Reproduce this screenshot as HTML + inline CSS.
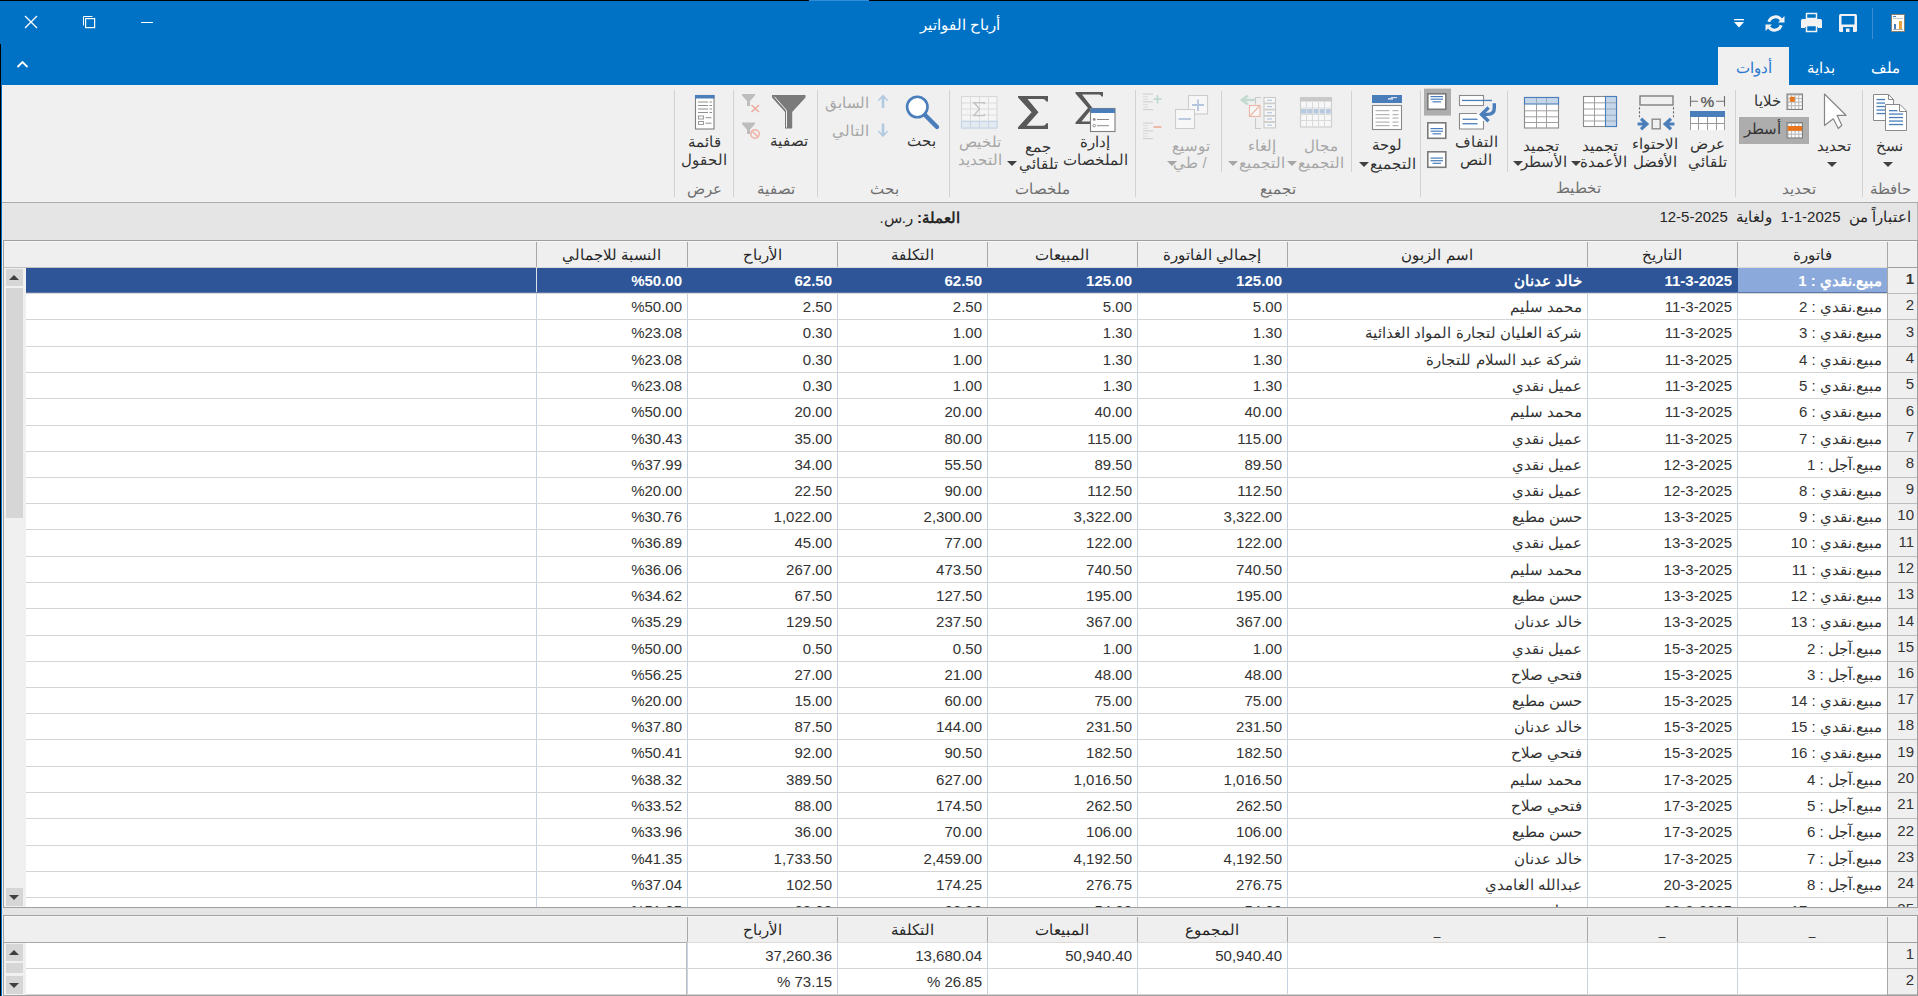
<!DOCTYPE html>
<html><head><meta charset="utf-8"><title>أرباح الفواتير</title><style>
*{box-sizing:border-box}
html,body{margin:0;padding:0}
body{width:1918px;height:996px;overflow:hidden;position:relative;background:#F0F0F0;font-family:"Liberation Sans",sans-serif;font-size:15px;color:#262626}
div,span,svg{position:absolute}
.t{white-space:nowrap;direction:rtl;text-align:center}
.gframe{border:1px solid #A0A0A0;background:#F0F0F0}
.hdr{background:#EFEFEF}
.hl{width:1px;background:#A8A8A8}
.hb{height:1px;background:#A0A0A0}
.ht{height:26px;line-height:26px;text-align:center;direction:rtl;white-space:nowrap;color:#262626}
.sbbg{background:#F0F0F0}
.sbtn{background:#D6D6D6}
.sthumb{background:#D6D6D6}
.tup{left:3px;top:50%;margin-top:-3px;width:0;height:0;border-left:5px solid transparent;border-right:5px solid transparent;border-bottom:5px solid #404040}
.tdn{left:3px;top:50%;margin-top:-2px;width:0;height:0;border-left:5px solid transparent;border-right:5px solid transparent;border-top:5px solid #404040}
.vl{width:1px;background:#C9D3E3}
.ct{direction:rtl;text-align:right;white-space:nowrap;color:#333;overflow:hidden}
.ct.sel{color:#fff;font-weight:bold}
.ri{left:0;width:30px;background:#EFEFEF;text-align:right;padding-right:3px;color:#333}
.ri.rsel{font-weight:bold}
.rt{white-space:nowrap;direction:rtl;text-align:center;color:#333;line-height:18px;height:18px}
.dis{color:#A6A6A6}
.gl{white-space:nowrap;direction:rtl;text-align:center;color:#707070;line-height:18px;height:18px}
.sep{width:1px;background:#D2D2D2}
.arr{width:0;height:0;border-left:5px solid transparent;border-right:5px solid transparent;border-top:5px solid #404040}
.arr.dis{border-top-color:#A6A6A6}
</style></head>
<body>
<div style="left:0;top:0;width:1918px;height:85px;background:#0072C6"></div>
<div style="left:0;top:0;width:1918px;height:1px;background:#000"></div>
<div style="left:809px;top:0;width:60px;height:1px;background:#2F8FD8"></div>
<div style="left:0;top:44px;width:1px;height:952px;background:#000"></div>
<div style="left:1px;top:85px;width:1px;height:911px;background:#0072C6"></div>
<div class="t" style="left:760px;top:15px;width:400px;height:20px;line-height:20px;color:#fff">أرباح الفواتير</div>
<svg style="left:24px;top:15px" width="14" height="14" viewBox="0 0 14 14"><path d="M1 1L13 13M13 1L1 13" stroke="#fff" stroke-width="1.3"/></svg>
<svg style="left:82px;top:15px" width="14" height="14" viewBox="0 0 14 14"><rect x="3.6" y="3.6" width="9" height="9" fill="none" stroke="#fff" stroke-width="1.2"/><path d="M1.5 10.5V1.5H10.5" fill="none" stroke="#fff" stroke-width="1"/></svg>
<div style="left:141px;top:22px;width:12px;height:1px;background:#fff"></div>
<svg style="left:16px;top:60px" width="13" height="9" viewBox="0 0 13 9"><path d="M1.5 7L6.5 2L11.5 7" fill="none" stroke="#fff" stroke-width="1.8"/></svg>
<div style="left:1718px;top:47px;width:71px;height:38px;background:#F0F0F0"></div>
<div class="t" style="left:1718px;top:58px;width:71px;height:20px;line-height:20px;color:#2B79D0">أدوات</div>
<div class="t" style="left:1790px;top:58px;width:62px;height:20px;line-height:20px;color:#fff">بداية</div>
<div class="t" style="left:1852px;top:58px;width:66px;height:20px;line-height:20px;color:#fff">ملف</div>
<svg style="left:1720px;top:0" width="198" height="45" viewBox="1720 0 198 45"><rect x="1891.5" y="14.5" width="13" height="17" fill="#fff" stroke="#8C8070"/><rect x="1893" y="16" width="3" height="1" fill="#4A7EBB"/><rect x="1893" y="18" width="10" height="1" fill="#C8C8C8"/><rect x="1894" y="24" width="2" height="5" fill="#4A7EBB"/><rect x="1899" y="21" width="3" height="8" fill="#E8A33A"/><rect x="1893" y="29" width="10" height="1" fill="#B0B0B0"/><rect x="1872" y="8" width="1" height="31" fill="#3C8BD3"/><path d="M1839 15.5Q1839 14 1840.5 14H1855.5Q1857 14 1857 15.5V30.5Q1857 32 1855.5 32H1840.5Q1839 32 1839 30.5Z" fill="#F2F2F2"/><rect x="1841.5" y="16" width="13" height="8.5" fill="#0072C6"/><rect x="1843" y="27" width="10" height="5" fill="#0072C6"/><rect x="1846" y="28.5" width="3.5" height="3.5" fill="#F2F2F2"/><rect x="1806.5" y="13.5" width="10" height="5" fill="none" stroke="#F2F2F2" stroke-width="1.5"/><path d="M1801 20.5Q1801 19 1802.5 19H1820.5Q1822 19 1822 20.5V27H1801Z" fill="#F2F2F2"/><rect x="1801" y="26" width="4" height="2" fill="#F2F2F2"/><rect x="1818" y="26" width="4" height="2" fill="#F2F2F2"/><rect x="1806.5" y="25.5" width="10" height="6" fill="#0072C6" stroke="#F2F2F2" stroke-width="1.5"/><path d="M1768.8 21.8A7 7 0 0 1 1781.2 19.8" fill="none" stroke="#F2F2F2" stroke-width="3"/><path d="M1784.5 16V22.5H1778Z" fill="#F2F2F2"/><path d="M1781.2 25.2A7 7 0 0 1 1768.8 27.2" fill="none" stroke="#F2F2F2" stroke-width="3"/><path d="M1765.5 31V24.5H1772Z" fill="#F2F2F2"/><rect x="1734" y="19" width="10" height="1.3" fill="#fff"/><path d="M1734 22H1744L1739 27.5Z" fill="#fff"/></svg>
<div style="left:2px;top:202px;width:1916px;height:1px;background:#ABABAB"></div>
<div style="left:2px;top:203px;width:1916px;height:37px;background:#E5E5E5"></div>
<div style="left:1917px;top:203px;width:1px;height:37px;background:#B8B8B8"></div>
<div style="left:1402px;top:207px;width:509px;height:20px;line-height:20px;direction:rtl;text-align:right;white-space:nowrap">اعتباراً من&nbsp; <bdi>1-1-2025</bdi>&nbsp; ولغاية&nbsp; <bdi>12-5-2025</bdi></div>
<div style="left:702px;top:208px;width:258px;height:20px;line-height:20px;direction:rtl;text-align:right;white-space:nowrap"><b>العملة:</b> ر.س.</div>
<svg style="left:660px;top:84px" width="1258" height="120" viewBox="660 84 1258 120" shape-rendering="geometricPrecision"><path d="M1873.5 94.5H1888.5L1893.5 99.5V120.5H1873.5Z" fill="#fff" stroke="#8A8A8A"/><path d="M1888.5 94.5V99.5H1893.5" fill="none" stroke="#8A8A8A"/><rect x="1876.5" y="98.9" width="8.5" height="1.3" fill="#4A7EBB"/><rect x="1876.5" y="102.4" width="8.5" height="1.3" fill="#4A7EBB"/><rect x="1876.5" y="105.9" width="8.5" height="1.3" fill="#4A7EBB"/><rect x="1876.5" y="109.4" width="8.5" height="1.3" fill="#4A7EBB"/><rect x="1876.5" y="112.9" width="8.5" height="1.3" fill="#4A7EBB"/><path d="M1885.5 104.5H1900L1906.5 111V130.5H1885.5Z" fill="#fff" stroke="#8A8A8A"/><path d="M1899.5 104.5V111.5H1906.5" fill="none" stroke="#8A8A8A"/><rect x="1889" y="110" width="8.5" height="1.3" fill="#4A7EBB"/><rect x="1889" y="113.4" width="14" height="1.3" fill="#4A7EBB"/><rect x="1889" y="116.9" width="14" height="1.3" fill="#4A7EBB"/><rect x="1889" y="120.4" width="14" height="1.3" fill="#4A7EBB"/><rect x="1889" y="123.9" width="14" height="1.3" fill="#4A7EBB"/><path d="M1824.5 94L1846 115.3H1837L1841.8 125.2L1838.3 128.5L1833.3 118.8L1824.5 125.5Z" fill="#fff" stroke="#878787" stroke-width="1.2" stroke-linejoin="round"/><rect x="1739" y="117" width="70" height="27" fill="#ADADAD"/><rect x="1787.0" y="94.0" width="15.5" height="15.5" fill="#BDBDBD" stroke="#7F7F7F"/><rect x="1788.5" y="95.5" width="2.4" height="2.4" fill="#fff"/><rect x="1788.5" y="99.1" width="2.4" height="2.4" fill="#fff"/><rect x="1788.5" y="102.7" width="2.4" height="2.4" fill="#fff"/><rect x="1788.5" y="106.3" width="2.4" height="2.4" fill="#fff"/><rect x="1792.1" y="95.5" width="2.4" height="2.4" fill="#fff"/><rect x="1792.1" y="99.1" width="2.4" height="2.4" fill="#fff"/><rect x="1792.1" y="102.7" width="2.4" height="2.4" fill="#fff"/><rect x="1792.1" y="106.3" width="2.4" height="2.4" fill="#fff"/><rect x="1795.7" y="95.5" width="2.4" height="2.4" fill="#fff"/><rect x="1795.7" y="99.1" width="2.4" height="2.4" fill="#fff"/><rect x="1795.7" y="102.7" width="2.4" height="2.4" fill="#fff"/><rect x="1795.7" y="106.3" width="2.4" height="2.4" fill="#fff"/><rect x="1799.3" y="95.5" width="2.4" height="2.4" fill="#fff"/><rect x="1799.3" y="99.1" width="2.4" height="2.4" fill="#fff"/><rect x="1799.3" y="102.7" width="2.4" height="2.4" fill="#fff"/><rect x="1799.3" y="106.3" width="2.4" height="2.4" fill="#fff"/><rect x="1789.8" y="96.8" width="5" height="5" fill="#E8741C"/><rect x="1787.0" y="122.5" width="15.5" height="15.5" fill="#BDBDBD" stroke="#7F7F7F"/><rect x="1788.5" y="124.0" width="2.4" height="2.4" fill="#fff"/><rect x="1788.5" y="127.6" width="2.4" height="2.4" fill="#fff"/><rect x="1788.5" y="131.2" width="2.4" height="2.4" fill="#fff"/><rect x="1788.5" y="134.8" width="2.4" height="2.4" fill="#fff"/><rect x="1792.1" y="124.0" width="2.4" height="2.4" fill="#fff"/><rect x="1792.1" y="127.6" width="2.4" height="2.4" fill="#fff"/><rect x="1792.1" y="131.2" width="2.4" height="2.4" fill="#fff"/><rect x="1792.1" y="134.8" width="2.4" height="2.4" fill="#fff"/><rect x="1795.7" y="124.0" width="2.4" height="2.4" fill="#fff"/><rect x="1795.7" y="127.6" width="2.4" height="2.4" fill="#fff"/><rect x="1795.7" y="131.2" width="2.4" height="2.4" fill="#fff"/><rect x="1795.7" y="134.8" width="2.4" height="2.4" fill="#fff"/><rect x="1799.3" y="124.0" width="2.4" height="2.4" fill="#fff"/><rect x="1799.3" y="127.6" width="2.4" height="2.4" fill="#fff"/><rect x="1799.3" y="131.2" width="2.4" height="2.4" fill="#fff"/><rect x="1799.3" y="134.8" width="2.4" height="2.4" fill="#fff"/><rect x="1787.5" y="126" width="14.5" height="4.8" fill="#E8741C"/><path d="M1690.5 96V106.5M1690.5 101.3H1698M1716 101.3H1724M1724.5 96V106.5" fill="none" stroke="#707070" stroke-width="1.1"/><text x="1707.3" y="106.8" font-family="Liberation Sans" font-weight="bold" font-size="15.5" text-anchor="middle" fill="#6A6A6A">%</text><rect x="1690" y="111" width="35" height="6" fill="#4A7EBB"/><rect x="1690.5" y="117" width="34" height="13" fill="#fff"/><path d="M1690.5 117V130M1698.5 117V130M1707.5 117V130M1716.5 117V130M1724.5 117V130M1690 123.5H1725" fill="none" stroke="#9A9A9A"/><rect x="1640" y="96" width="33" height="9" fill="none" stroke="#7F7F7F" stroke-width="1.4"/><path d="M1639.5 107.2V117.2M1673.5 107.2V117.2" stroke="#6A6A6A" stroke-width="1.1" stroke-dasharray="2.4 1.6"/><rect x="1652.2" y="119.2" width="8" height="9.6" fill="none" stroke="#8A8A8A" stroke-width="1.4"/><path d="M1637.6 124H1647M1641 118.8L1646.8 124L1641 129.2" fill="none" stroke="#4A7EBB" stroke-width="3.2" stroke-linejoin="miter"/><path d="M1674.4 124H1665M1671 118.8L1665.2 124L1671 129.2" fill="none" stroke="#4A7EBB" stroke-width="3.2" stroke-linejoin="miter"/><rect x="1583.5" y="96.5" width="33" height="30" fill="#fff" stroke="#8A8A8A" stroke-width="1.1"/><path d="M1594.5 96.5V126.5M1583.5 102.8H1605M1583.5 109H1605M1583.5 115.2H1605M1583.5 121H1605" stroke="#A0A0A0"/><rect x="1605.5" y="96.5" width="11" height="30" fill="#C5D6EA" stroke="#4A7EBB" stroke-width="1.1"/><path d="M1606 102.8H1616M1606 109H1616M1606 115.2H1616M1606 121H1616" stroke="#9AA8B8"/><rect x="1524.5" y="97.5" width="34" height="30.5" fill="#fff" stroke="#8A8A8A" stroke-width="1.1"/><path d="M1536.5 97.5V128M1546.5 97.5V128M1524.5 110.8H1558.5M1524.5 116.8H1558.5M1524.5 122.5H1558.5" stroke="#A0A0A0"/><rect x="1524.5" y="97.5" width="34" height="6.5" fill="#C5D6EA" stroke="#4A7EBB" stroke-width="1.1"/><path d="M1536.5 98V104M1546.5 98V104" stroke="#9AA8B8"/><rect x="1459.5" y="95.5" width="24" height="10" fill="#fff" stroke="#8A8A8A" stroke-width="1.1"/><rect x="1462" y="99.8" width="30" height="1.3" fill="#4A7EBB"/><rect x="1459.5" y="113.5" width="24" height="15.5" fill="#fff"/><path d="M1477 113.5H1459.5V129H1483.5V121" fill="none" stroke="#8A8A8A" stroke-width="1.1"/><rect x="1462.5" y="118.6" width="15" height="1.3" fill="#4A7EBB"/><rect x="1462.5" y="123.1" width="15" height="1.3" fill="#4A7EBB"/><path d="M1494.3 103.3V108Q1494.3 114.4 1487.5 114.4H1482" fill="none" stroke="#4A7EBB" stroke-width="3.4"/><path d="M1488.6 107.6L1481.5 114.4L1488.6 121.2" fill="none" stroke="#4A7EBB" stroke-width="3.4" stroke-linejoin="miter"/><rect x="1424" y="88.6" width="27" height="27" fill="#ADADAD"/><rect x="1427.8" y="93.8" width="18" height="15.5" fill="#fff" stroke="#7A7A7A" stroke-width="1.6"/><rect x="1430.5" y="96" width="12.5" height="1.2" fill="#4A7EBB"/><rect x="1430.5" y="98.6" width="12.5" height="1.2" fill="#4A7EBB"/><rect x="1432.5" y="101.2" width="8.5" height="1.2" fill="#4A7EBB"/><rect x="1427.8" y="122.8" width="18" height="15.5" fill="#fff" stroke="#7A7A7A" stroke-width="1.6"/><rect x="1430.5" y="128" width="12.5" height="1.2" fill="#4A7EBB"/><rect x="1430.5" y="130.6" width="12.5" height="1.2" fill="#4A7EBB"/><rect x="1432.5" y="133.2" width="8.5" height="1.2" fill="#4A7EBB"/><rect x="1427.8" y="151.8" width="18" height="15.5" fill="#fff" stroke="#7A7A7A" stroke-width="1.6"/><rect x="1430.5" y="157.5" width="12.5" height="1.2" fill="#4A7EBB"/><rect x="1430.5" y="160.1" width="12.5" height="1.2" fill="#4A7EBB"/><rect x="1432.5" y="162.7" width="8.5" height="1.2" fill="#4A7EBB"/><rect x="1372" y="95" width="30" height="8" fill="#4A7EBB"/><rect x="1388" y="98.3" width="5" height="1.2" fill="#fff"/><rect x="1391" y="97" width="6" height="1.2" fill="#D0DCEB"/><rect x="1372.5" y="105.5" width="29" height="24" fill="#fff" stroke="#8A8A8A" stroke-width="1.1"/><rect x="1375.5" y="110" width="14" height="1.2" fill="#B5B5B5"/><rect x="1392.5" y="110" width="6" height="1.2" fill="#B5B5B5"/><rect x="1375.5" y="114" width="14" height="1.2" fill="#B5B5B5"/><rect x="1392.5" y="114" width="6" height="1.2" fill="#B5B5B5"/><rect x="1375.5" y="117.5" width="14" height="1.2" fill="#B5B5B5"/><rect x="1392.5" y="117.5" width="6" height="1.2" fill="#B5B5B5"/><rect x="1375.5" y="121.5" width="14" height="1.2" fill="#B5B5B5"/><rect x="1392.5" y="121.5" width="6" height="1.2" fill="#B5B5B5"/><rect x="1375.5" y="125" width="14" height="1.2" fill="#B5B5B5"/><rect x="1392.5" y="125" width="6" height="1.2" fill="#B5B5B5"/><rect x="1300.5" y="97.5" width="31" height="29.5" fill="#F7F7F7" stroke="#CDCDCD" stroke-width="1.1"/><rect x="1300.5" y="97.5" width="31" height="4" fill="#C8C8C8"/><path d="M1306.5 102V127M1312.5 102V127M1318.5 102V127M1324.5 102V127M1300.5 108H1331.5M1300.5 114.5H1331.5M1300.5 120.5H1331.5" stroke="#DADADA"/><rect x="1301.0" y="109" width="5" height="4.6" fill="#B7CAE0"/><rect x="1307.2" y="109" width="5" height="4.6" fill="#B7CAE0"/><rect x="1313.4" y="109" width="5" height="4.6" fill="#B7CAE0"/><rect x="1319.6" y="109" width="5" height="4.6" fill="#B7CAE0"/><rect x="1325.8" y="109" width="5" height="4.6" fill="#B7CAE0"/><path d="M1256 100H1244M1248 95.5L1242 100L1248 104.5" fill="none" stroke="#C3DAD0" stroke-width="2.6"/><path d="M1261 97.5H1255.5V104.5M1255.5 118V128.5H1261" fill="none" stroke="#CACACA" stroke-width="1.1"/><rect x="1249.5" y="105.5" width="10.5" height="11" fill="#F7F7F7" stroke="#EDB9AA" stroke-width="1.2"/><path d="M1250 116L1259.5 106" stroke="#EDB9AA" stroke-width="1.2"/><rect x="1264" y="97.5" width="11.5" height="5.6" fill="#F7F7F7" stroke="#CACACA" stroke-width="1.1"/><rect x="1267" y="99.8" width="5" height="1.1" fill="#B0C4DC"/><rect x="1264" y="103.7" width="11.5" height="5.6" fill="#F7F7F7" stroke="#CACACA" stroke-width="1.1"/><rect x="1267" y="106.0" width="5" height="1.1" fill="#B0C4DC"/><rect x="1264" y="109.9" width="11.5" height="5.6" fill="#F7F7F7" stroke="#CACACA" stroke-width="1.1"/><rect x="1267" y="112.2" width="5" height="1.1" fill="#B0C4DC"/><rect x="1264" y="116.1" width="11.5" height="5.6" fill="#F7F7F7" stroke="#CACACA" stroke-width="1.1"/><rect x="1267" y="118.39999999999999" width="5" height="1.1" fill="#B0C4DC"/><rect x="1264" y="122.3" width="11.5" height="5.6" fill="#F7F7F7" stroke="#CACACA" stroke-width="1.1"/><rect x="1267" y="124.6" width="5" height="1.1" fill="#B0C4DC"/><rect x="1188.5" y="95.5" width="19" height="18.5" fill="#F7F7F7" stroke="#CDCDCD" stroke-width="1.1"/><path d="M1198 99.5V111M1192 105H1204" stroke="#B3C6DD" stroke-width="1.8"/><rect x="1175.5" y="109.5" width="19" height="19" fill="#F7F7F7" stroke="#CDCDCD" stroke-width="1.1"/><path d="M1178.5 119H1191" stroke="#B3C6DD" stroke-width="1.8"/><rect x="1143" y="93.5" width="10" height="1.1" fill="#CFCFCF"/><rect x="1143" y="96.1" width="5" height="1.1" fill="#DDDDDD"/><rect x="1143" y="98.7" width="5" height="1.1" fill="#DDDDDD"/><rect x="1143" y="101.3" width="10" height="1.1" fill="#CFCFCF"/><rect x="1143" y="103.9" width="5" height="1.1" fill="#DDDDDD"/><rect x="1143" y="106.5" width="5" height="1.1" fill="#DDDDDD"/><rect x="1143" y="109.1" width="10" height="1.1" fill="#CFCFCF"/><path d="M1157.5 95V103.5M1153.5 99.2H1161.5" stroke="#BFD9CF" stroke-width="1.8"/><rect x="1143" y="122.5" width="10" height="1.1" fill="#CFCFCF"/><rect x="1143" y="125.1" width="5" height="1.1" fill="#DDDDDD"/><rect x="1143" y="127.7" width="5" height="1.1" fill="#DDDDDD"/><rect x="1143" y="130.3" width="10" height="1.1" fill="#CFCFCF"/><rect x="1143" y="132.9" width="5" height="1.1" fill="#DDDDDD"/><rect x="1143" y="135.5" width="5" height="1.1" fill="#DDDDDD"/><rect x="1143" y="138.1" width="10" height="1.1" fill="#CFCFCF"/><path d="M1153.5 127H1161.5" stroke="#EDB3A3" stroke-width="1.8"/><path d="M1075.5 92H1103V96.5H1101.6Q1100.6 94.5 1099 94.5H1082L1092.5 108L1081.5 121.5H1099.5Q1101.2 121.5 1102 119.5H1103V124H1075.5V122.5L1088 108L1075.5 93.5Z" fill="#595959"/><rect x="1090.5" y="108.5" width="24.5" height="23" fill="#fff" stroke="#7F7F7F" stroke-width="1.1"/><rect x="1090.5" y="108.5" width="24.5" height="4.5" fill="#4A7EBB"/><circle cx="1094.2" cy="119.4" r="1.4" fill="#8A8A8A"/><circle cx="1094.2" cy="125.6" r="1.3" fill="none" stroke="#8A8A8A" stroke-width="0.9"/><rect x="1097" y="119" width="12" height="1" fill="#8A8A8A"/><rect x="1097" y="125.2" width="12" height="1" fill="#8A8A8A"/><path d="M1018 96H1048V101.5H1046.3Q1045.3 99 1043 99H1027.5L1038.5 112.2L1026.5 125.8H1043Q1045.3 125.8 1046.3 123.2H1048V129H1018V127.3L1031.6 112.2L1018 97.6Z" fill="#595959"/><rect x="961.5" y="96.5" width="35.5" height="31.5" fill="#F5F5F5" stroke="#D8D8D8" stroke-width="1.1"/><path d="M970.5 96.5V128M979.5 96.5V128M988.5 96.5V128M961.5 103H997M961.5 109H997M961.5 115H997M961.5 121H997" stroke="#DCDCDC"/><rect x="961.5" y="121.5" width="35.5" height="6.5" fill="#E3EAF2" stroke="#C6D6E8" stroke-width="1.1"/><path d="M970.5 122V128M979.5 122V128M988.5 122V128" stroke="#C6D6E8"/><path d="M972.8 102H985V104.3H984Q983.6 103.2 982.6 103.2H975.7L980.4 109L975.2 115H982.7Q983.7 115 984.2 113.8H985V116.2H972.8V115.6L978.6 109L972.8 102.6Z" fill="#C4C4C4"/><circle cx="917.3" cy="107" r="10.2" fill="#fff" stroke="#4A7EBB" stroke-width="2.6"/><path d="M925 115L937 127" stroke="#4A7EBB" stroke-width="4.4" stroke-linecap="round"/><path d="M883 94.5L888 100V101.5L884.3 98.5V108H881.7V98.5L878 101.5V100Z" fill="#B3C9E0"/><path d="M883 137.2L888 131.7V130.2L884.3 133.2V123.5H881.7V133.2L878 130.2V131.7Z" fill="#B3C9E0"/><path d="M772 95H805.5V97.5L792.2 112V128.5H785V112L772 97.5Z" fill="#7A7A7A"/><path d="M774.5 96.8L786.5 110.5V127.5" fill="none" stroke="#fff" stroke-width="0.9"/><path d="M742 94H755V95.5L750 101V106H747V101L742 95.5Z" fill="#BDBDBD"/><path d="M751.5 105L759 112M759 105L751.5 112" stroke="#EFA99A" stroke-width="1.5"/><path d="M742 122.5H755V124L750 129.5V134H747V129.5L742 124Z" fill="#BDBDBD"/><circle cx="755" cy="134" r="4.2" fill="#F0F0F0" stroke="#EFB0A4" stroke-width="1.5"/><path d="M752.2 131.2L757.8 136.8" stroke="#EFB0A4" stroke-width="1.5"/><rect x="695.5" y="95.5" width="18.5" height="33.5" fill="#fff" stroke="#808080" stroke-width="1.1"/><rect x="695" y="95" width="19.5" height="3.5" fill="#4A7EBB"/><rect x="698" y="101.5" width="10" height="1" fill="#8F8F8F"/><rect x="709.5" y="101.5" width="2.5" height="1" fill="#8F8F8F"/><rect x="698" y="105" width="10" height="1" fill="#8F8F8F"/><rect x="709.5" y="105" width="2.5" height="1" fill="#8F8F8F"/><rect x="698" y="108.5" width="10" height="1" fill="#8F8F8F"/><rect x="709.5" y="108.5" width="2.5" height="1" fill="#8F8F8F"/><rect x="698" y="112" width="10" height="1" fill="#8F8F8F"/><rect x="709.5" y="112" width="2.5" height="1" fill="#8F8F8F"/><rect x="698.5" y="116" width="5" height="3" fill="none" stroke="#8F8F8F" stroke-width="0.9"/><rect x="705.5" y="117.2" width="6" height="1" fill="#8F8F8F"/><rect x="698.5" y="121.5" width="5" height="3" fill="none" stroke="#8F8F8F" stroke-width="0.9"/><rect x="705.5" y="122.7" width="6" height="1" fill="#8F8F8F"/></svg>
<div class="sep" style="left:1862px;top:90px;height:107px"></div>
<div class="sep" style="left:1735px;top:90px;height:107px"></div>
<div class="sep" style="left:1420px;top:90px;height:107px"></div>
<div class="sep" style="left:1135px;top:90px;height:107px"></div>
<div class="sep" style="left:949px;top:90px;height:107px"></div>
<div class="sep" style="left:817px;top:90px;height:107px"></div>
<div class="sep" style="left:733px;top:90px;height:107px"></div>
<div class="sep" style="left:674px;top:90px;height:107px"></div>
<div class="sep" style="left:1507px;top:91px;height:81px"></div>
<div class="sep" style="left:1351px;top:91px;height:81px"></div>
<div class="sep" style="left:1221px;top:91px;height:81px"></div>
<div class="rt" style="left:1829.0px;top:136.5px;width:120px;">نسخ</div>
<div class="arr" style="left:1883px;top:161.5px"></div>
<div class="gl" style="left:1830.0px;top:180px;width:120px;">حافظة</div>
<div class="rt" style="left:1774.0px;top:136.5px;width:120px;">تحديد</div>
<div class="arr" style="left:1827px;top:161.5px"></div>
<div class="rt" style="left:1661px;top:91.5px;width:120px;text-align:right;">خلايا</div>
<div class="rt" style="left:1661px;top:120px;width:120px;text-align:right;">أسطر</div>
<div class="gl" style="left:1739.0px;top:180px;width:120px;">تحديد</div>
<div class="rt" style="left:1647.0px;top:135px;width:120px;">عرض</div>
<div class="rt" style="left:1647.0px;top:153px;width:120px;">تلقائي</div>
<div class="rt" style="left:1595.0px;top:135px;width:120px;">الاحتواء</div>
<div class="rt" style="left:1595.0px;top:153px;width:120px;">الأفضل</div>
<div class="rt" style="left:1540.0px;top:137px;width:120px;">تجميد</div>
<div class="rt" style="left:1543.0px;top:153px;width:120px;">الأعمدة</div>
<div class="arr" style="left:1571px;top:161px"></div>
<div class="rt" style="left:1481.0px;top:137px;width:120px;">تجميد</div>
<div class="rt" style="left:1484.0px;top:153px;width:120px;">الأسطر</div>
<div class="arr" style="left:1513px;top:161px"></div>
<div class="rt" style="left:1416.0px;top:133px;width:120px;">التفاف</div>
<div class="rt" style="left:1416.0px;top:151px;width:120px;">النص</div>
<div class="gl" style="left:1518.0px;top:179px;width:120px;">تخطيط</div>
<div class="rt" style="left:1327.0px;top:135.5px;width:120px;">لوحة</div>
<div class="rt" style="left:1333.0px;top:154.5px;width:120px;">التجميع</div>
<div class="arr" style="left:1358.5px;top:161.5px"></div>
<div class="rt dis" style="left:1261.0px;top:136.5px;width:120px;">مجال</div>
<div class="rt dis" style="left:1261.0px;top:154px;width:120px;">التجميع</div>
<div class="arr dis" style="left:1287px;top:161px"></div>
<div class="rt dis" style="left:1202.0px;top:136.5px;width:120px;">إلغاء</div>
<div class="rt dis" style="left:1202.0px;top:154px;width:120px;">التجميع</div>
<div class="arr dis" style="left:1228px;top:161px"></div>
<div class="rt dis" style="left:1131.0px;top:136.5px;width:120px;">توسيع</div>
<div class="rt dis" style="left:1130.0px;top:154px;width:120px;">/ طي</div>
<div class="arr dis" style="left:1167px;top:161px"></div>
<div class="gl" style="left:1218.0px;top:180px;width:120px;">تجميع</div>
<div class="rt" style="left:1035.0px;top:133px;width:120px;">إدارة</div>
<div class="rt" style="left:1035.0px;top:150.5px;width:120px;">الملخصات</div>
<div class="rt" style="left:978.0px;top:138px;width:120px;">جمع</div>
<div class="rt" style="left:978.0px;top:154.5px;width:120px;">تلقائي</div>
<div class="arr" style="left:1007px;top:161px"></div>
<div class="rt dis" style="left:920.0px;top:133px;width:120px;">تلخيص</div>
<div class="rt dis" style="left:920.0px;top:150.5px;width:120px;">التحديد</div>
<div class="gl" style="left:982.0px;top:180px;width:120px;">ملخصات</div>
<div class="rt" style="left:861.5px;top:132px;width:120px;">بحث</div>
<div class="rt dis" style="left:749px;top:93.5px;width:120px;text-align:right;">السابق</div>
<div class="rt dis" style="left:749px;top:121.5px;width:120px;text-align:right;">التالي</div>
<div class="gl" style="left:824.0px;top:180px;width:120px;">بحث</div>
<div class="rt" style="left:729.0px;top:132px;width:120px;">تصفية</div>
<div class="gl" style="left:716.0px;top:180px;width:120px;">تصفية</div>
<div class="rt" style="left:644.0px;top:133px;width:120px;">قائمة</div>
<div class="rt" style="left:644.0px;top:151px;width:120px;">الحقول</div>
<div class="gl" style="left:644.0px;top:180px;width:120px;">عرض</div>
<div class="gframe" style="left:3px;top:240px;width:1915px;height:668px"></div>
<div class="hdr" style="left:4px;top:241px;width:1913px;height:26px"></div>
<div class="hl" style="left:1737px;top:241px;height:26px"></div>
<div class="ht" style="left:1737px;top:242px;width:150px">فاتورة</div>
<div class="hl" style="left:1587px;top:241px;height:26px"></div>
<div class="ht" style="left:1587px;top:242px;width:150px">التاريخ</div>
<div class="hl" style="left:1287px;top:241px;height:26px"></div>
<div class="ht" style="left:1287px;top:242px;width:300px">اسم الزبون</div>
<div class="hl" style="left:1137px;top:241px;height:26px"></div>
<div class="ht" style="left:1137px;top:242px;width:150px">إجمالي الفاتورة</div>
<div class="hl" style="left:987px;top:241px;height:26px"></div>
<div class="ht" style="left:987px;top:242px;width:150px">المبيعات</div>
<div class="hl" style="left:837px;top:241px;height:26px"></div>
<div class="ht" style="left:837px;top:242px;width:150px">التكلفة</div>
<div class="hl" style="left:687px;top:241px;height:26px"></div>
<div class="ht" style="left:687px;top:242px;width:150px">الأرباح</div>
<div class="hl" style="left:536px;top:241px;height:26px"></div>
<div class="ht" style="left:536px;top:242px;width:151px">النسبة للاجمالي</div>
<div class="hl" style="left:1887px;top:241px;height:26px"></div>
<div class="hb" style="left:4px;top:267px;width:532px;background:#C4C0BC"></div>
<div class="hb" style="left:536px;top:267px;width:1351px;background:#DEDBD7"></div>
<div class="hb" style="left:1887px;top:267px;width:30px;background:#A0A0A0"></div>
<div style="left:4px;top:241px;width:1913px;height:1px;background:#F7F7F7"></div>
<div class="sbbg" style="left:4px;top:268px;width:22px;height:639px"></div>
<div class="sbtn" style="left:6px;top:269px;width:17px;height:17px"><div class="tup"></div></div>
<div class="sthumb" style="left:6px;top:288px;width:17px;height:230px"></div>
<div class="sbtn" style="left:6px;top:888px;width:17px;height:18px"><div class="tdn"></div></div>
<div style="position:absolute;left:26px;top:268px;width:1861px;height:639px;background:#fff;overflow:hidden">
<div style="position:absolute;left:0;top:0px;width:1861px;height:25px;background:#2D5597"></div>
<div style="position:absolute;left:1712px;top:0px;width:149px;height:25px;background:#8BA9DB"></div>
<div style="position:absolute;left:510px;top:0px;width:1px;height:25px;background:#DCE1EA"></div>
<div style="position:absolute;left:0;top:24px;width:1861px;height:1px;background:#5C77A8"></div>
<div style="position:absolute;left:0;top:25px;width:1861px;height:1px;background:#D8D8D8"></div>
<div class="ct sel" style="left:1712px;top:0px;width:144px;height:25px;line-height:25px">مبيع.نقدي : 1</div>
<div class="ct sel" style="left:1562px;top:0px;width:144px;height:25px;line-height:25px">11-3-2025</div>
<div class="ct sel" style="left:1262px;top:0px;width:294px;height:25px;line-height:25px">خالد عدنان</div>
<div class="ct sel" style="left:1112px;top:0px;width:144px;height:25px;line-height:25px">125.00</div>
<div class="ct sel" style="left:962px;top:0px;width:144px;height:25px;line-height:25px">125.00</div>
<div class="ct sel" style="left:812px;top:0px;width:144px;height:25px;line-height:25px">62.50</div>
<div class="ct sel" style="left:662px;top:0px;width:144px;height:25px;line-height:25px">62.50</div>
<div class="ct sel" style="left:511px;top:0px;width:145px;height:25px;line-height:25px">%50.00</div>
<div style="position:absolute;left:0;top:51px;width:1861px;height:1px;background:#D5D5D5"></div>
<div class="vl" style="left:1711px;top:26px;height:25px"></div>
<div class="ct" style="left:1712px;top:26px;width:144px;height:25px;line-height:25px">مبيع.نقدي : 2</div>
<div class="vl" style="left:1561px;top:26px;height:25px"></div>
<div class="ct" style="left:1562px;top:26px;width:144px;height:25px;line-height:25px">11-3-2025</div>
<div class="vl" style="left:1261px;top:26px;height:25px"></div>
<div class="ct" style="left:1262px;top:26px;width:294px;height:25px;line-height:25px">محمد سليم</div>
<div class="vl" style="left:1111px;top:26px;height:25px"></div>
<div class="ct" style="left:1112px;top:26px;width:144px;height:25px;line-height:25px">5.00</div>
<div class="vl" style="left:961px;top:26px;height:25px"></div>
<div class="ct" style="left:962px;top:26px;width:144px;height:25px;line-height:25px">5.00</div>
<div class="vl" style="left:811px;top:26px;height:25px"></div>
<div class="ct" style="left:812px;top:26px;width:144px;height:25px;line-height:25px">2.50</div>
<div class="vl" style="left:661px;top:26px;height:25px"></div>
<div class="ct" style="left:662px;top:26px;width:144px;height:25px;line-height:25px">2.50</div>
<div class="vl" style="left:510px;top:26px;height:25px"></div>
<div class="ct" style="left:511px;top:26px;width:145px;height:25px;line-height:25px">%50.00</div>
<div style="position:absolute;left:0;top:78px;width:1861px;height:1px;background:#D5D5D5"></div>
<div class="vl" style="left:1711px;top:52px;height:26px"></div>
<div class="ct" style="left:1712px;top:52px;width:144px;height:26px;line-height:26px">مبيع.نقدي : 3</div>
<div class="vl" style="left:1561px;top:52px;height:26px"></div>
<div class="ct" style="left:1562px;top:52px;width:144px;height:26px;line-height:26px">11-3-2025</div>
<div class="vl" style="left:1261px;top:52px;height:26px"></div>
<div class="ct" style="left:1262px;top:52px;width:294px;height:26px;line-height:26px">شركة العليان لتجارة المواد الغذائية</div>
<div class="vl" style="left:1111px;top:52px;height:26px"></div>
<div class="ct" style="left:1112px;top:52px;width:144px;height:26px;line-height:26px">1.30</div>
<div class="vl" style="left:961px;top:52px;height:26px"></div>
<div class="ct" style="left:962px;top:52px;width:144px;height:26px;line-height:26px">1.30</div>
<div class="vl" style="left:811px;top:52px;height:26px"></div>
<div class="ct" style="left:812px;top:52px;width:144px;height:26px;line-height:26px">1.00</div>
<div class="vl" style="left:661px;top:52px;height:26px"></div>
<div class="ct" style="left:662px;top:52px;width:144px;height:26px;line-height:26px">0.30</div>
<div class="vl" style="left:510px;top:52px;height:26px"></div>
<div class="ct" style="left:511px;top:52px;width:145px;height:26px;line-height:26px">%23.08</div>
<div style="position:absolute;left:0;top:104px;width:1861px;height:1px;background:#D5D5D5"></div>
<div class="vl" style="left:1711px;top:79px;height:25px"></div>
<div class="ct" style="left:1712px;top:79px;width:144px;height:25px;line-height:25px">مبيع.نقدي : 4</div>
<div class="vl" style="left:1561px;top:79px;height:25px"></div>
<div class="ct" style="left:1562px;top:79px;width:144px;height:25px;line-height:25px">11-3-2025</div>
<div class="vl" style="left:1261px;top:79px;height:25px"></div>
<div class="ct" style="left:1262px;top:79px;width:294px;height:25px;line-height:25px">شركة عبد السلام للتجارة</div>
<div class="vl" style="left:1111px;top:79px;height:25px"></div>
<div class="ct" style="left:1112px;top:79px;width:144px;height:25px;line-height:25px">1.30</div>
<div class="vl" style="left:961px;top:79px;height:25px"></div>
<div class="ct" style="left:962px;top:79px;width:144px;height:25px;line-height:25px">1.30</div>
<div class="vl" style="left:811px;top:79px;height:25px"></div>
<div class="ct" style="left:812px;top:79px;width:144px;height:25px;line-height:25px">1.00</div>
<div class="vl" style="left:661px;top:79px;height:25px"></div>
<div class="ct" style="left:662px;top:79px;width:144px;height:25px;line-height:25px">0.30</div>
<div class="vl" style="left:510px;top:79px;height:25px"></div>
<div class="ct" style="left:511px;top:79px;width:145px;height:25px;line-height:25px">%23.08</div>
<div style="position:absolute;left:0;top:130px;width:1861px;height:1px;background:#D5D5D5"></div>
<div class="vl" style="left:1711px;top:105px;height:25px"></div>
<div class="ct" style="left:1712px;top:105px;width:144px;height:25px;line-height:25px">مبيع.نقدي : 5</div>
<div class="vl" style="left:1561px;top:105px;height:25px"></div>
<div class="ct" style="left:1562px;top:105px;width:144px;height:25px;line-height:25px">11-3-2025</div>
<div class="vl" style="left:1261px;top:105px;height:25px"></div>
<div class="ct" style="left:1262px;top:105px;width:294px;height:25px;line-height:25px">عميل نقدي</div>
<div class="vl" style="left:1111px;top:105px;height:25px"></div>
<div class="ct" style="left:1112px;top:105px;width:144px;height:25px;line-height:25px">1.30</div>
<div class="vl" style="left:961px;top:105px;height:25px"></div>
<div class="ct" style="left:962px;top:105px;width:144px;height:25px;line-height:25px">1.30</div>
<div class="vl" style="left:811px;top:105px;height:25px"></div>
<div class="ct" style="left:812px;top:105px;width:144px;height:25px;line-height:25px">1.00</div>
<div class="vl" style="left:661px;top:105px;height:25px"></div>
<div class="ct" style="left:662px;top:105px;width:144px;height:25px;line-height:25px">0.30</div>
<div class="vl" style="left:510px;top:105px;height:25px"></div>
<div class="ct" style="left:511px;top:105px;width:145px;height:25px;line-height:25px">%23.08</div>
<div style="position:absolute;left:0;top:157px;width:1861px;height:1px;background:#D5D5D5"></div>
<div class="vl" style="left:1711px;top:131px;height:26px"></div>
<div class="ct" style="left:1712px;top:131px;width:144px;height:26px;line-height:26px">مبيع.نقدي : 6</div>
<div class="vl" style="left:1561px;top:131px;height:26px"></div>
<div class="ct" style="left:1562px;top:131px;width:144px;height:26px;line-height:26px">11-3-2025</div>
<div class="vl" style="left:1261px;top:131px;height:26px"></div>
<div class="ct" style="left:1262px;top:131px;width:294px;height:26px;line-height:26px">محمد سليم</div>
<div class="vl" style="left:1111px;top:131px;height:26px"></div>
<div class="ct" style="left:1112px;top:131px;width:144px;height:26px;line-height:26px">40.00</div>
<div class="vl" style="left:961px;top:131px;height:26px"></div>
<div class="ct" style="left:962px;top:131px;width:144px;height:26px;line-height:26px">40.00</div>
<div class="vl" style="left:811px;top:131px;height:26px"></div>
<div class="ct" style="left:812px;top:131px;width:144px;height:26px;line-height:26px">20.00</div>
<div class="vl" style="left:661px;top:131px;height:26px"></div>
<div class="ct" style="left:662px;top:131px;width:144px;height:26px;line-height:26px">20.00</div>
<div class="vl" style="left:510px;top:131px;height:26px"></div>
<div class="ct" style="left:511px;top:131px;width:145px;height:26px;line-height:26px">%50.00</div>
<div style="position:absolute;left:0;top:183px;width:1861px;height:1px;background:#D5D5D5"></div>
<div class="vl" style="left:1711px;top:158px;height:25px"></div>
<div class="ct" style="left:1712px;top:158px;width:144px;height:25px;line-height:25px">مبيع.نقدي : 7</div>
<div class="vl" style="left:1561px;top:158px;height:25px"></div>
<div class="ct" style="left:1562px;top:158px;width:144px;height:25px;line-height:25px">11-3-2025</div>
<div class="vl" style="left:1261px;top:158px;height:25px"></div>
<div class="ct" style="left:1262px;top:158px;width:294px;height:25px;line-height:25px">عميل نقدي</div>
<div class="vl" style="left:1111px;top:158px;height:25px"></div>
<div class="ct" style="left:1112px;top:158px;width:144px;height:25px;line-height:25px">115.00</div>
<div class="vl" style="left:961px;top:158px;height:25px"></div>
<div class="ct" style="left:962px;top:158px;width:144px;height:25px;line-height:25px">115.00</div>
<div class="vl" style="left:811px;top:158px;height:25px"></div>
<div class="ct" style="left:812px;top:158px;width:144px;height:25px;line-height:25px">80.00</div>
<div class="vl" style="left:661px;top:158px;height:25px"></div>
<div class="ct" style="left:662px;top:158px;width:144px;height:25px;line-height:25px">35.00</div>
<div class="vl" style="left:510px;top:158px;height:25px"></div>
<div class="ct" style="left:511px;top:158px;width:145px;height:25px;line-height:25px">%30.43</div>
<div style="position:absolute;left:0;top:209px;width:1861px;height:1px;background:#D5D5D5"></div>
<div class="vl" style="left:1711px;top:184px;height:25px"></div>
<div class="ct" style="left:1712px;top:184px;width:144px;height:25px;line-height:25px">مبيع.آجل : 1</div>
<div class="vl" style="left:1561px;top:184px;height:25px"></div>
<div class="ct" style="left:1562px;top:184px;width:144px;height:25px;line-height:25px">12-3-2025</div>
<div class="vl" style="left:1261px;top:184px;height:25px"></div>
<div class="ct" style="left:1262px;top:184px;width:294px;height:25px;line-height:25px">عميل نقدي</div>
<div class="vl" style="left:1111px;top:184px;height:25px"></div>
<div class="ct" style="left:1112px;top:184px;width:144px;height:25px;line-height:25px">89.50</div>
<div class="vl" style="left:961px;top:184px;height:25px"></div>
<div class="ct" style="left:962px;top:184px;width:144px;height:25px;line-height:25px">89.50</div>
<div class="vl" style="left:811px;top:184px;height:25px"></div>
<div class="ct" style="left:812px;top:184px;width:144px;height:25px;line-height:25px">55.50</div>
<div class="vl" style="left:661px;top:184px;height:25px"></div>
<div class="ct" style="left:662px;top:184px;width:144px;height:25px;line-height:25px">34.00</div>
<div class="vl" style="left:510px;top:184px;height:25px"></div>
<div class="ct" style="left:511px;top:184px;width:145px;height:25px;line-height:25px">%37.99</div>
<div style="position:absolute;left:0;top:235px;width:1861px;height:1px;background:#D5D5D5"></div>
<div class="vl" style="left:1711px;top:210px;height:25px"></div>
<div class="ct" style="left:1712px;top:210px;width:144px;height:25px;line-height:25px">مبيع.نقدي : 8</div>
<div class="vl" style="left:1561px;top:210px;height:25px"></div>
<div class="ct" style="left:1562px;top:210px;width:144px;height:25px;line-height:25px">12-3-2025</div>
<div class="vl" style="left:1261px;top:210px;height:25px"></div>
<div class="ct" style="left:1262px;top:210px;width:294px;height:25px;line-height:25px">عميل نقدي</div>
<div class="vl" style="left:1111px;top:210px;height:25px"></div>
<div class="ct" style="left:1112px;top:210px;width:144px;height:25px;line-height:25px">112.50</div>
<div class="vl" style="left:961px;top:210px;height:25px"></div>
<div class="ct" style="left:962px;top:210px;width:144px;height:25px;line-height:25px">112.50</div>
<div class="vl" style="left:811px;top:210px;height:25px"></div>
<div class="ct" style="left:812px;top:210px;width:144px;height:25px;line-height:25px">90.00</div>
<div class="vl" style="left:661px;top:210px;height:25px"></div>
<div class="ct" style="left:662px;top:210px;width:144px;height:25px;line-height:25px">22.50</div>
<div class="vl" style="left:510px;top:210px;height:25px"></div>
<div class="ct" style="left:511px;top:210px;width:145px;height:25px;line-height:25px">%20.00</div>
<div style="position:absolute;left:0;top:261px;width:1861px;height:1px;background:#D5D5D5"></div>
<div class="vl" style="left:1711px;top:236px;height:25px"></div>
<div class="ct" style="left:1712px;top:236px;width:144px;height:25px;line-height:25px">مبيع.نقدي : 9</div>
<div class="vl" style="left:1561px;top:236px;height:25px"></div>
<div class="ct" style="left:1562px;top:236px;width:144px;height:25px;line-height:25px">13-3-2025</div>
<div class="vl" style="left:1261px;top:236px;height:25px"></div>
<div class="ct" style="left:1262px;top:236px;width:294px;height:25px;line-height:25px">حسن مطيع</div>
<div class="vl" style="left:1111px;top:236px;height:25px"></div>
<div class="ct" style="left:1112px;top:236px;width:144px;height:25px;line-height:25px">3,322.00</div>
<div class="vl" style="left:961px;top:236px;height:25px"></div>
<div class="ct" style="left:962px;top:236px;width:144px;height:25px;line-height:25px">3,322.00</div>
<div class="vl" style="left:811px;top:236px;height:25px"></div>
<div class="ct" style="left:812px;top:236px;width:144px;height:25px;line-height:25px">2,300.00</div>
<div class="vl" style="left:661px;top:236px;height:25px"></div>
<div class="ct" style="left:662px;top:236px;width:144px;height:25px;line-height:25px">1,022.00</div>
<div class="vl" style="left:510px;top:236px;height:25px"></div>
<div class="ct" style="left:511px;top:236px;width:145px;height:25px;line-height:25px">%30.76</div>
<div style="position:absolute;left:0;top:288px;width:1861px;height:1px;background:#D5D5D5"></div>
<div class="vl" style="left:1711px;top:262px;height:26px"></div>
<div class="ct" style="left:1712px;top:262px;width:144px;height:26px;line-height:26px">مبيع.نقدي : 10</div>
<div class="vl" style="left:1561px;top:262px;height:26px"></div>
<div class="ct" style="left:1562px;top:262px;width:144px;height:26px;line-height:26px">13-3-2025</div>
<div class="vl" style="left:1261px;top:262px;height:26px"></div>
<div class="ct" style="left:1262px;top:262px;width:294px;height:26px;line-height:26px">عميل نقدي</div>
<div class="vl" style="left:1111px;top:262px;height:26px"></div>
<div class="ct" style="left:1112px;top:262px;width:144px;height:26px;line-height:26px">122.00</div>
<div class="vl" style="left:961px;top:262px;height:26px"></div>
<div class="ct" style="left:962px;top:262px;width:144px;height:26px;line-height:26px">122.00</div>
<div class="vl" style="left:811px;top:262px;height:26px"></div>
<div class="ct" style="left:812px;top:262px;width:144px;height:26px;line-height:26px">77.00</div>
<div class="vl" style="left:661px;top:262px;height:26px"></div>
<div class="ct" style="left:662px;top:262px;width:144px;height:26px;line-height:26px">45.00</div>
<div class="vl" style="left:510px;top:262px;height:26px"></div>
<div class="ct" style="left:511px;top:262px;width:145px;height:26px;line-height:26px">%36.89</div>
<div style="position:absolute;left:0;top:314px;width:1861px;height:1px;background:#D5D5D5"></div>
<div class="vl" style="left:1711px;top:289px;height:25px"></div>
<div class="ct" style="left:1712px;top:289px;width:144px;height:25px;line-height:25px">مبيع.نقدي : 11</div>
<div class="vl" style="left:1561px;top:289px;height:25px"></div>
<div class="ct" style="left:1562px;top:289px;width:144px;height:25px;line-height:25px">13-3-2025</div>
<div class="vl" style="left:1261px;top:289px;height:25px"></div>
<div class="ct" style="left:1262px;top:289px;width:294px;height:25px;line-height:25px">محمد سليم</div>
<div class="vl" style="left:1111px;top:289px;height:25px"></div>
<div class="ct" style="left:1112px;top:289px;width:144px;height:25px;line-height:25px">740.50</div>
<div class="vl" style="left:961px;top:289px;height:25px"></div>
<div class="ct" style="left:962px;top:289px;width:144px;height:25px;line-height:25px">740.50</div>
<div class="vl" style="left:811px;top:289px;height:25px"></div>
<div class="ct" style="left:812px;top:289px;width:144px;height:25px;line-height:25px">473.50</div>
<div class="vl" style="left:661px;top:289px;height:25px"></div>
<div class="ct" style="left:662px;top:289px;width:144px;height:25px;line-height:25px">267.00</div>
<div class="vl" style="left:510px;top:289px;height:25px"></div>
<div class="ct" style="left:511px;top:289px;width:145px;height:25px;line-height:25px">%36.06</div>
<div style="position:absolute;left:0;top:340px;width:1861px;height:1px;background:#D5D5D5"></div>
<div class="vl" style="left:1711px;top:315px;height:25px"></div>
<div class="ct" style="left:1712px;top:315px;width:144px;height:25px;line-height:25px">مبيع.نقدي : 12</div>
<div class="vl" style="left:1561px;top:315px;height:25px"></div>
<div class="ct" style="left:1562px;top:315px;width:144px;height:25px;line-height:25px">13-3-2025</div>
<div class="vl" style="left:1261px;top:315px;height:25px"></div>
<div class="ct" style="left:1262px;top:315px;width:294px;height:25px;line-height:25px">حسن مطيع</div>
<div class="vl" style="left:1111px;top:315px;height:25px"></div>
<div class="ct" style="left:1112px;top:315px;width:144px;height:25px;line-height:25px">195.00</div>
<div class="vl" style="left:961px;top:315px;height:25px"></div>
<div class="ct" style="left:962px;top:315px;width:144px;height:25px;line-height:25px">195.00</div>
<div class="vl" style="left:811px;top:315px;height:25px"></div>
<div class="ct" style="left:812px;top:315px;width:144px;height:25px;line-height:25px">127.50</div>
<div class="vl" style="left:661px;top:315px;height:25px"></div>
<div class="ct" style="left:662px;top:315px;width:144px;height:25px;line-height:25px">67.50</div>
<div class="vl" style="left:510px;top:315px;height:25px"></div>
<div class="ct" style="left:511px;top:315px;width:145px;height:25px;line-height:25px">%34.62</div>
<div style="position:absolute;left:0;top:367px;width:1861px;height:1px;background:#D5D5D5"></div>
<div class="vl" style="left:1711px;top:341px;height:26px"></div>
<div class="ct" style="left:1712px;top:341px;width:144px;height:26px;line-height:26px">مبيع.نقدي : 13</div>
<div class="vl" style="left:1561px;top:341px;height:26px"></div>
<div class="ct" style="left:1562px;top:341px;width:144px;height:26px;line-height:26px">13-3-2025</div>
<div class="vl" style="left:1261px;top:341px;height:26px"></div>
<div class="ct" style="left:1262px;top:341px;width:294px;height:26px;line-height:26px">خالد عدنان</div>
<div class="vl" style="left:1111px;top:341px;height:26px"></div>
<div class="ct" style="left:1112px;top:341px;width:144px;height:26px;line-height:26px">367.00</div>
<div class="vl" style="left:961px;top:341px;height:26px"></div>
<div class="ct" style="left:962px;top:341px;width:144px;height:26px;line-height:26px">367.00</div>
<div class="vl" style="left:811px;top:341px;height:26px"></div>
<div class="ct" style="left:812px;top:341px;width:144px;height:26px;line-height:26px">237.50</div>
<div class="vl" style="left:661px;top:341px;height:26px"></div>
<div class="ct" style="left:662px;top:341px;width:144px;height:26px;line-height:26px">129.50</div>
<div class="vl" style="left:510px;top:341px;height:26px"></div>
<div class="ct" style="left:511px;top:341px;width:145px;height:26px;line-height:26px">%35.29</div>
<div style="position:absolute;left:0;top:393px;width:1861px;height:1px;background:#D5D5D5"></div>
<div class="vl" style="left:1711px;top:368px;height:25px"></div>
<div class="ct" style="left:1712px;top:368px;width:144px;height:25px;line-height:25px">مبيع.آجل : 2</div>
<div class="vl" style="left:1561px;top:368px;height:25px"></div>
<div class="ct" style="left:1562px;top:368px;width:144px;height:25px;line-height:25px">15-3-2025</div>
<div class="vl" style="left:1261px;top:368px;height:25px"></div>
<div class="ct" style="left:1262px;top:368px;width:294px;height:25px;line-height:25px">عميل نقدي</div>
<div class="vl" style="left:1111px;top:368px;height:25px"></div>
<div class="ct" style="left:1112px;top:368px;width:144px;height:25px;line-height:25px">1.00</div>
<div class="vl" style="left:961px;top:368px;height:25px"></div>
<div class="ct" style="left:962px;top:368px;width:144px;height:25px;line-height:25px">1.00</div>
<div class="vl" style="left:811px;top:368px;height:25px"></div>
<div class="ct" style="left:812px;top:368px;width:144px;height:25px;line-height:25px">0.50</div>
<div class="vl" style="left:661px;top:368px;height:25px"></div>
<div class="ct" style="left:662px;top:368px;width:144px;height:25px;line-height:25px">0.50</div>
<div class="vl" style="left:510px;top:368px;height:25px"></div>
<div class="ct" style="left:511px;top:368px;width:145px;height:25px;line-height:25px">%50.00</div>
<div style="position:absolute;left:0;top:419px;width:1861px;height:1px;background:#D5D5D5"></div>
<div class="vl" style="left:1711px;top:394px;height:25px"></div>
<div class="ct" style="left:1712px;top:394px;width:144px;height:25px;line-height:25px">مبيع.آجل : 3</div>
<div class="vl" style="left:1561px;top:394px;height:25px"></div>
<div class="ct" style="left:1562px;top:394px;width:144px;height:25px;line-height:25px">15-3-2025</div>
<div class="vl" style="left:1261px;top:394px;height:25px"></div>
<div class="ct" style="left:1262px;top:394px;width:294px;height:25px;line-height:25px">فتحي صلاح</div>
<div class="vl" style="left:1111px;top:394px;height:25px"></div>
<div class="ct" style="left:1112px;top:394px;width:144px;height:25px;line-height:25px">48.00</div>
<div class="vl" style="left:961px;top:394px;height:25px"></div>
<div class="ct" style="left:962px;top:394px;width:144px;height:25px;line-height:25px">48.00</div>
<div class="vl" style="left:811px;top:394px;height:25px"></div>
<div class="ct" style="left:812px;top:394px;width:144px;height:25px;line-height:25px">21.00</div>
<div class="vl" style="left:661px;top:394px;height:25px"></div>
<div class="ct" style="left:662px;top:394px;width:144px;height:25px;line-height:25px">27.00</div>
<div class="vl" style="left:510px;top:394px;height:25px"></div>
<div class="ct" style="left:511px;top:394px;width:145px;height:25px;line-height:25px">%56.25</div>
<div style="position:absolute;left:0;top:445px;width:1861px;height:1px;background:#D5D5D5"></div>
<div class="vl" style="left:1711px;top:420px;height:25px"></div>
<div class="ct" style="left:1712px;top:420px;width:144px;height:25px;line-height:25px">مبيع.نقدي : 14</div>
<div class="vl" style="left:1561px;top:420px;height:25px"></div>
<div class="ct" style="left:1562px;top:420px;width:144px;height:25px;line-height:25px">15-3-2025</div>
<div class="vl" style="left:1261px;top:420px;height:25px"></div>
<div class="ct" style="left:1262px;top:420px;width:294px;height:25px;line-height:25px">حسن مطيع</div>
<div class="vl" style="left:1111px;top:420px;height:25px"></div>
<div class="ct" style="left:1112px;top:420px;width:144px;height:25px;line-height:25px">75.00</div>
<div class="vl" style="left:961px;top:420px;height:25px"></div>
<div class="ct" style="left:962px;top:420px;width:144px;height:25px;line-height:25px">75.00</div>
<div class="vl" style="left:811px;top:420px;height:25px"></div>
<div class="ct" style="left:812px;top:420px;width:144px;height:25px;line-height:25px">60.00</div>
<div class="vl" style="left:661px;top:420px;height:25px"></div>
<div class="ct" style="left:662px;top:420px;width:144px;height:25px;line-height:25px">15.00</div>
<div class="vl" style="left:510px;top:420px;height:25px"></div>
<div class="ct" style="left:511px;top:420px;width:145px;height:25px;line-height:25px">%20.00</div>
<div style="position:absolute;left:0;top:471px;width:1861px;height:1px;background:#D5D5D5"></div>
<div class="vl" style="left:1711px;top:446px;height:25px"></div>
<div class="ct" style="left:1712px;top:446px;width:144px;height:25px;line-height:25px">مبيع.نقدي : 15</div>
<div class="vl" style="left:1561px;top:446px;height:25px"></div>
<div class="ct" style="left:1562px;top:446px;width:144px;height:25px;line-height:25px">15-3-2025</div>
<div class="vl" style="left:1261px;top:446px;height:25px"></div>
<div class="ct" style="left:1262px;top:446px;width:294px;height:25px;line-height:25px">خالد عدنان</div>
<div class="vl" style="left:1111px;top:446px;height:25px"></div>
<div class="ct" style="left:1112px;top:446px;width:144px;height:25px;line-height:25px">231.50</div>
<div class="vl" style="left:961px;top:446px;height:25px"></div>
<div class="ct" style="left:962px;top:446px;width:144px;height:25px;line-height:25px">231.50</div>
<div class="vl" style="left:811px;top:446px;height:25px"></div>
<div class="ct" style="left:812px;top:446px;width:144px;height:25px;line-height:25px">144.00</div>
<div class="vl" style="left:661px;top:446px;height:25px"></div>
<div class="ct" style="left:662px;top:446px;width:144px;height:25px;line-height:25px">87.50</div>
<div class="vl" style="left:510px;top:446px;height:25px"></div>
<div class="ct" style="left:511px;top:446px;width:145px;height:25px;line-height:25px">%37.80</div>
<div style="position:absolute;left:0;top:498px;width:1861px;height:1px;background:#D5D5D5"></div>
<div class="vl" style="left:1711px;top:472px;height:26px"></div>
<div class="ct" style="left:1712px;top:472px;width:144px;height:26px;line-height:26px">مبيع.نقدي : 16</div>
<div class="vl" style="left:1561px;top:472px;height:26px"></div>
<div class="ct" style="left:1562px;top:472px;width:144px;height:26px;line-height:26px">15-3-2025</div>
<div class="vl" style="left:1261px;top:472px;height:26px"></div>
<div class="ct" style="left:1262px;top:472px;width:294px;height:26px;line-height:26px">فتحي صلاح</div>
<div class="vl" style="left:1111px;top:472px;height:26px"></div>
<div class="ct" style="left:1112px;top:472px;width:144px;height:26px;line-height:26px">182.50</div>
<div class="vl" style="left:961px;top:472px;height:26px"></div>
<div class="ct" style="left:962px;top:472px;width:144px;height:26px;line-height:26px">182.50</div>
<div class="vl" style="left:811px;top:472px;height:26px"></div>
<div class="ct" style="left:812px;top:472px;width:144px;height:26px;line-height:26px">90.50</div>
<div class="vl" style="left:661px;top:472px;height:26px"></div>
<div class="ct" style="left:662px;top:472px;width:144px;height:26px;line-height:26px">92.00</div>
<div class="vl" style="left:510px;top:472px;height:26px"></div>
<div class="ct" style="left:511px;top:472px;width:145px;height:26px;line-height:26px">%50.41</div>
<div style="position:absolute;left:0;top:524px;width:1861px;height:1px;background:#D5D5D5"></div>
<div class="vl" style="left:1711px;top:499px;height:25px"></div>
<div class="ct" style="left:1712px;top:499px;width:144px;height:25px;line-height:25px">مبيع.آجل : 4</div>
<div class="vl" style="left:1561px;top:499px;height:25px"></div>
<div class="ct" style="left:1562px;top:499px;width:144px;height:25px;line-height:25px">17-3-2025</div>
<div class="vl" style="left:1261px;top:499px;height:25px"></div>
<div class="ct" style="left:1262px;top:499px;width:294px;height:25px;line-height:25px">محمد سليم</div>
<div class="vl" style="left:1111px;top:499px;height:25px"></div>
<div class="ct" style="left:1112px;top:499px;width:144px;height:25px;line-height:25px">1,016.50</div>
<div class="vl" style="left:961px;top:499px;height:25px"></div>
<div class="ct" style="left:962px;top:499px;width:144px;height:25px;line-height:25px">1,016.50</div>
<div class="vl" style="left:811px;top:499px;height:25px"></div>
<div class="ct" style="left:812px;top:499px;width:144px;height:25px;line-height:25px">627.00</div>
<div class="vl" style="left:661px;top:499px;height:25px"></div>
<div class="ct" style="left:662px;top:499px;width:144px;height:25px;line-height:25px">389.50</div>
<div class="vl" style="left:510px;top:499px;height:25px"></div>
<div class="ct" style="left:511px;top:499px;width:145px;height:25px;line-height:25px">%38.32</div>
<div style="position:absolute;left:0;top:550px;width:1861px;height:1px;background:#D5D5D5"></div>
<div class="vl" style="left:1711px;top:525px;height:25px"></div>
<div class="ct" style="left:1712px;top:525px;width:144px;height:25px;line-height:25px">مبيع.آجل : 5</div>
<div class="vl" style="left:1561px;top:525px;height:25px"></div>
<div class="ct" style="left:1562px;top:525px;width:144px;height:25px;line-height:25px">17-3-2025</div>
<div class="vl" style="left:1261px;top:525px;height:25px"></div>
<div class="ct" style="left:1262px;top:525px;width:294px;height:25px;line-height:25px">فتحي صلاح</div>
<div class="vl" style="left:1111px;top:525px;height:25px"></div>
<div class="ct" style="left:1112px;top:525px;width:144px;height:25px;line-height:25px">262.50</div>
<div class="vl" style="left:961px;top:525px;height:25px"></div>
<div class="ct" style="left:962px;top:525px;width:144px;height:25px;line-height:25px">262.50</div>
<div class="vl" style="left:811px;top:525px;height:25px"></div>
<div class="ct" style="left:812px;top:525px;width:144px;height:25px;line-height:25px">174.50</div>
<div class="vl" style="left:661px;top:525px;height:25px"></div>
<div class="ct" style="left:662px;top:525px;width:144px;height:25px;line-height:25px">88.00</div>
<div class="vl" style="left:510px;top:525px;height:25px"></div>
<div class="ct" style="left:511px;top:525px;width:145px;height:25px;line-height:25px">%33.52</div>
<div style="position:absolute;left:0;top:577px;width:1861px;height:1px;background:#D5D5D5"></div>
<div class="vl" style="left:1711px;top:551px;height:26px"></div>
<div class="ct" style="left:1712px;top:551px;width:144px;height:26px;line-height:26px">مبيع.آجل : 6</div>
<div class="vl" style="left:1561px;top:551px;height:26px"></div>
<div class="ct" style="left:1562px;top:551px;width:144px;height:26px;line-height:26px">17-3-2025</div>
<div class="vl" style="left:1261px;top:551px;height:26px"></div>
<div class="ct" style="left:1262px;top:551px;width:294px;height:26px;line-height:26px">حسن مطيع</div>
<div class="vl" style="left:1111px;top:551px;height:26px"></div>
<div class="ct" style="left:1112px;top:551px;width:144px;height:26px;line-height:26px">106.00</div>
<div class="vl" style="left:961px;top:551px;height:26px"></div>
<div class="ct" style="left:962px;top:551px;width:144px;height:26px;line-height:26px">106.00</div>
<div class="vl" style="left:811px;top:551px;height:26px"></div>
<div class="ct" style="left:812px;top:551px;width:144px;height:26px;line-height:26px">70.00</div>
<div class="vl" style="left:661px;top:551px;height:26px"></div>
<div class="ct" style="left:662px;top:551px;width:144px;height:26px;line-height:26px">36.00</div>
<div class="vl" style="left:510px;top:551px;height:26px"></div>
<div class="ct" style="left:511px;top:551px;width:145px;height:26px;line-height:26px">%33.96</div>
<div style="position:absolute;left:0;top:603px;width:1861px;height:1px;background:#D5D5D5"></div>
<div class="vl" style="left:1711px;top:578px;height:25px"></div>
<div class="ct" style="left:1712px;top:578px;width:144px;height:25px;line-height:25px">مبيع.آجل : 7</div>
<div class="vl" style="left:1561px;top:578px;height:25px"></div>
<div class="ct" style="left:1562px;top:578px;width:144px;height:25px;line-height:25px">17-3-2025</div>
<div class="vl" style="left:1261px;top:578px;height:25px"></div>
<div class="ct" style="left:1262px;top:578px;width:294px;height:25px;line-height:25px">خالد عدنان</div>
<div class="vl" style="left:1111px;top:578px;height:25px"></div>
<div class="ct" style="left:1112px;top:578px;width:144px;height:25px;line-height:25px">4,192.50</div>
<div class="vl" style="left:961px;top:578px;height:25px"></div>
<div class="ct" style="left:962px;top:578px;width:144px;height:25px;line-height:25px">4,192.50</div>
<div class="vl" style="left:811px;top:578px;height:25px"></div>
<div class="ct" style="left:812px;top:578px;width:144px;height:25px;line-height:25px">2,459.00</div>
<div class="vl" style="left:661px;top:578px;height:25px"></div>
<div class="ct" style="left:662px;top:578px;width:144px;height:25px;line-height:25px">1,733.50</div>
<div class="vl" style="left:510px;top:578px;height:25px"></div>
<div class="ct" style="left:511px;top:578px;width:145px;height:25px;line-height:25px">%41.35</div>
<div style="position:absolute;left:0;top:629px;width:1861px;height:1px;background:#D5D5D5"></div>
<div class="vl" style="left:1711px;top:604px;height:25px"></div>
<div class="ct" style="left:1712px;top:604px;width:144px;height:25px;line-height:25px">مبيع.آجل : 8</div>
<div class="vl" style="left:1561px;top:604px;height:25px"></div>
<div class="ct" style="left:1562px;top:604px;width:144px;height:25px;line-height:25px">20-3-2025</div>
<div class="vl" style="left:1261px;top:604px;height:25px"></div>
<div class="ct" style="left:1262px;top:604px;width:294px;height:25px;line-height:25px">عبدالله الغامدي</div>
<div class="vl" style="left:1111px;top:604px;height:25px"></div>
<div class="ct" style="left:1112px;top:604px;width:144px;height:25px;line-height:25px">276.75</div>
<div class="vl" style="left:961px;top:604px;height:25px"></div>
<div class="ct" style="left:962px;top:604px;width:144px;height:25px;line-height:25px">276.75</div>
<div class="vl" style="left:811px;top:604px;height:25px"></div>
<div class="ct" style="left:812px;top:604px;width:144px;height:25px;line-height:25px">174.25</div>
<div class="vl" style="left:661px;top:604px;height:25px"></div>
<div class="ct" style="left:662px;top:604px;width:144px;height:25px;line-height:25px">102.50</div>
<div class="vl" style="left:510px;top:604px;height:25px"></div>
<div class="ct" style="left:511px;top:604px;width:145px;height:25px;line-height:25px">%37.04</div>
<div style="position:absolute;left:0;top:655px;width:1861px;height:1px;background:#D5D5D5"></div>
<div class="vl" style="left:1711px;top:630px;height:25px"></div>
<div class="ct" style="left:1712px;top:630px;width:144px;height:25px;line-height:25px">مبيع.نقدي : 17</div>
<div class="vl" style="left:1561px;top:630px;height:25px"></div>
<div class="ct" style="left:1562px;top:630px;width:144px;height:25px;line-height:25px">20-3-2025</div>
<div class="vl" style="left:1261px;top:630px;height:25px"></div>
<div class="ct" style="left:1262px;top:630px;width:294px;height:25px;line-height:25px">عميل نقدي</div>
<div class="vl" style="left:1111px;top:630px;height:25px"></div>
<div class="ct" style="left:1112px;top:630px;width:144px;height:25px;line-height:25px">54.00</div>
<div class="vl" style="left:961px;top:630px;height:25px"></div>
<div class="ct" style="left:962px;top:630px;width:144px;height:25px;line-height:25px">54.00</div>
<div class="vl" style="left:811px;top:630px;height:25px"></div>
<div class="ct" style="left:812px;top:630px;width:144px;height:25px;line-height:25px">26.00</div>
<div class="vl" style="left:661px;top:630px;height:25px"></div>
<div class="ct" style="left:662px;top:630px;width:144px;height:25px;line-height:25px">28.00</div>
<div class="vl" style="left:510px;top:630px;height:25px"></div>
<div class="ct" style="left:511px;top:630px;width:145px;height:25px;line-height:25px">%51.85</div>
</div>
<div style="position:absolute;left:1887px;top:268px;width:30px;height:639px;overflow:hidden">
<div class="ri rsel" style="top:0px;height:25px;line-height:22px">1</div>
<div style="position:absolute;left:0;top:25px;width:30px;height:1px;background:#BDBDBD"></div>
<div class="ri" style="top:26px;height:25px;line-height:22px">2</div>
<div style="position:absolute;left:0;top:51px;width:30px;height:1px;background:#BDBDBD"></div>
<div class="ri" style="top:52px;height:26px;line-height:23px">3</div>
<div style="position:absolute;left:0;top:78px;width:30px;height:1px;background:#BDBDBD"></div>
<div class="ri" style="top:79px;height:25px;line-height:22px">4</div>
<div style="position:absolute;left:0;top:104px;width:30px;height:1px;background:#BDBDBD"></div>
<div class="ri" style="top:105px;height:25px;line-height:22px">5</div>
<div style="position:absolute;left:0;top:130px;width:30px;height:1px;background:#BDBDBD"></div>
<div class="ri" style="top:131px;height:26px;line-height:23px">6</div>
<div style="position:absolute;left:0;top:157px;width:30px;height:1px;background:#BDBDBD"></div>
<div class="ri" style="top:158px;height:25px;line-height:22px">7</div>
<div style="position:absolute;left:0;top:183px;width:30px;height:1px;background:#BDBDBD"></div>
<div class="ri" style="top:184px;height:25px;line-height:22px">8</div>
<div style="position:absolute;left:0;top:209px;width:30px;height:1px;background:#BDBDBD"></div>
<div class="ri" style="top:210px;height:25px;line-height:22px">9</div>
<div style="position:absolute;left:0;top:235px;width:30px;height:1px;background:#BDBDBD"></div>
<div class="ri" style="top:236px;height:25px;line-height:22px">10</div>
<div style="position:absolute;left:0;top:261px;width:30px;height:1px;background:#BDBDBD"></div>
<div class="ri" style="top:262px;height:26px;line-height:23px">11</div>
<div style="position:absolute;left:0;top:288px;width:30px;height:1px;background:#BDBDBD"></div>
<div class="ri" style="top:289px;height:25px;line-height:22px">12</div>
<div style="position:absolute;left:0;top:314px;width:30px;height:1px;background:#BDBDBD"></div>
<div class="ri" style="top:315px;height:25px;line-height:22px">13</div>
<div style="position:absolute;left:0;top:340px;width:30px;height:1px;background:#BDBDBD"></div>
<div class="ri" style="top:341px;height:26px;line-height:23px">14</div>
<div style="position:absolute;left:0;top:367px;width:30px;height:1px;background:#BDBDBD"></div>
<div class="ri" style="top:368px;height:25px;line-height:22px">15</div>
<div style="position:absolute;left:0;top:393px;width:30px;height:1px;background:#BDBDBD"></div>
<div class="ri" style="top:394px;height:25px;line-height:22px">16</div>
<div style="position:absolute;left:0;top:419px;width:30px;height:1px;background:#BDBDBD"></div>
<div class="ri" style="top:420px;height:25px;line-height:22px">17</div>
<div style="position:absolute;left:0;top:445px;width:30px;height:1px;background:#BDBDBD"></div>
<div class="ri" style="top:446px;height:25px;line-height:22px">18</div>
<div style="position:absolute;left:0;top:471px;width:30px;height:1px;background:#BDBDBD"></div>
<div class="ri" style="top:472px;height:26px;line-height:23px">19</div>
<div style="position:absolute;left:0;top:498px;width:30px;height:1px;background:#BDBDBD"></div>
<div class="ri" style="top:499px;height:25px;line-height:22px">20</div>
<div style="position:absolute;left:0;top:524px;width:30px;height:1px;background:#BDBDBD"></div>
<div class="ri" style="top:525px;height:25px;line-height:22px">21</div>
<div style="position:absolute;left:0;top:550px;width:30px;height:1px;background:#BDBDBD"></div>
<div class="ri" style="top:551px;height:26px;line-height:23px">22</div>
<div style="position:absolute;left:0;top:577px;width:30px;height:1px;background:#BDBDBD"></div>
<div class="ri" style="top:578px;height:25px;line-height:22px">23</div>
<div style="position:absolute;left:0;top:603px;width:30px;height:1px;background:#BDBDBD"></div>
<div class="ri" style="top:604px;height:25px;line-height:22px">24</div>
<div style="position:absolute;left:0;top:629px;width:30px;height:1px;background:#BDBDBD"></div>
<div class="ri" style="top:630px;height:25px;line-height:22px">25</div>
<div style="position:absolute;left:0;top:655px;width:30px;height:1px;background:#BDBDBD"></div>
</div>
<div class="hl" style="left:1887px;top:268px;height:639px"></div>
<div style="left:2px;top:908px;width:1916px;height:7px;background:#E5E5E5"></div>
<div class="gframe" style="left:3px;top:915px;width:1915px;height:81px"></div>
<div class="hdr" style="left:4px;top:916px;width:1913px;height:26px"></div>
<div class="hl" style="left:1737px;top:916px;height:26px"></div>
<div class="ht" style="left:1737px;top:917px;width:150px"><span style='position:static;font-size:12px'>_</span></div>
<div class="hl" style="left:1587px;top:916px;height:26px"></div>
<div class="ht" style="left:1587px;top:917px;width:150px"><span style='position:static;font-size:12px'>_</span></div>
<div class="hl" style="left:1287px;top:916px;height:26px"></div>
<div class="ht" style="left:1287px;top:917px;width:300px"><span style='position:static;font-size:12px'>_</span></div>
<div class="hl" style="left:1137px;top:916px;height:26px"></div>
<div class="ht" style="left:1137px;top:917px;width:150px">المجموع</div>
<div class="hl" style="left:987px;top:916px;height:26px"></div>
<div class="ht" style="left:987px;top:917px;width:150px">المبيعات</div>
<div class="hl" style="left:837px;top:916px;height:26px"></div>
<div class="ht" style="left:837px;top:917px;width:150px">التكلفة</div>
<div class="hl" style="left:687px;top:916px;height:26px"></div>
<div class="ht" style="left:687px;top:917px;width:150px">الأرباح</div>
<div class="hl" style="left:1887px;top:916px;height:26px"></div>
<div class="hb" style="left:4px;top:942px;width:683px;background:#A8A8A8"></div>
<div class="hb" style="left:687px;top:942px;width:1200px;background:#DEDBD7"></div>
<div class="hb" style="left:1887px;top:942px;width:30px;background:#A0A0A0"></div>
<div style="left:4px;top:916px;width:1913px;height:1px;background:#F7F7F7"></div>
<div class="sbbg" style="left:4px;top:943px;width:22px;height:52px"></div>
<div class="sbtn" style="left:6px;top:944px;width:17px;height:17px"><div class="tup"></div></div>
<div class="sthumb" style="left:6px;top:963px;width:17px;height:10px"></div>
<div class="sbtn" style="left:6px;top:976px;width:17px;height:18px"><div class="tdn"></div></div>
<div style="position:absolute;left:26px;top:943px;width:1861px;height:52px;background:#fff;overflow:hidden">
<div style="position:absolute;left:0;top:25px;width:1861px;height:1px;background:#D5D5D5"></div>
<div class="vl" style="left:1711px;top:0px;height:25px"></div>
<div class="ct" style="left:1712px;top:0px;width:144px;height:25px;line-height:25px"></div>
<div class="vl" style="left:1561px;top:0px;height:25px"></div>
<div class="ct" style="left:1562px;top:0px;width:144px;height:25px;line-height:25px"></div>
<div class="vl" style="left:1261px;top:0px;height:25px"></div>
<div class="ct" style="left:1262px;top:0px;width:294px;height:25px;line-height:25px"></div>
<div class="vl" style="left:1111px;top:0px;height:25px"></div>
<div class="ct" style="left:1112px;top:0px;width:144px;height:25px;line-height:25px">50,940.40</div>
<div class="vl" style="left:961px;top:0px;height:25px"></div>
<div class="ct" style="left:962px;top:0px;width:144px;height:25px;line-height:25px">50,940.40</div>
<div class="vl" style="left:811px;top:0px;height:25px"></div>
<div class="ct" style="left:812px;top:0px;width:144px;height:25px;line-height:25px">13,680.04</div>
<div class="vl" style="left:661px;top:0px;height:25px"></div>
<div class="ct" style="left:662px;top:0px;width:144px;height:25px;line-height:25px">37,260.36</div>
<div style="position:absolute;left:0;top:51px;width:1861px;height:1px;background:#D5D5D5"></div>
<div class="vl" style="left:1711px;top:26px;height:25px"></div>
<div class="ct" style="left:1712px;top:26px;width:144px;height:25px;line-height:25px"></div>
<div class="vl" style="left:1561px;top:26px;height:25px"></div>
<div class="ct" style="left:1562px;top:26px;width:144px;height:25px;line-height:25px"></div>
<div class="vl" style="left:1261px;top:26px;height:25px"></div>
<div class="ct" style="left:1262px;top:26px;width:294px;height:25px;line-height:25px"></div>
<div class="vl" style="left:1111px;top:26px;height:25px"></div>
<div class="ct" style="left:1112px;top:26px;width:144px;height:25px;line-height:25px"></div>
<div class="vl" style="left:961px;top:26px;height:25px"></div>
<div class="ct" style="left:962px;top:26px;width:144px;height:25px;line-height:25px"></div>
<div class="vl" style="left:811px;top:26px;height:25px"></div>
<div class="ct" style="left:812px;top:26px;width:144px;height:25px;line-height:25px"><bdi dir=ltr>% 26.85</bdi></div>
<div class="vl" style="left:661px;top:26px;height:25px"></div>
<div class="ct" style="left:662px;top:26px;width:144px;height:25px;line-height:25px"><bdi dir=ltr>% 73.15</bdi></div>
<div style="position:absolute;left:660px;top:0;width:1px;height:52px;background:#BDBDBD"></div>
</div>
<div style="position:absolute;left:1887px;top:943px;width:30px;height:52px;overflow:hidden">
<div class="ri" style="top:0px;height:25px;line-height:22px">1</div>
<div style="position:absolute;left:0;top:25px;width:30px;height:1px;background:#BDBDBD"></div>
<div class="ri" style="top:26px;height:25px;line-height:22px">2</div>
<div style="position:absolute;left:0;top:51px;width:30px;height:1px;background:#BDBDBD"></div>
</div>
<div class="hl" style="left:1887px;top:943px;height:52px"></div>
</body></html>
